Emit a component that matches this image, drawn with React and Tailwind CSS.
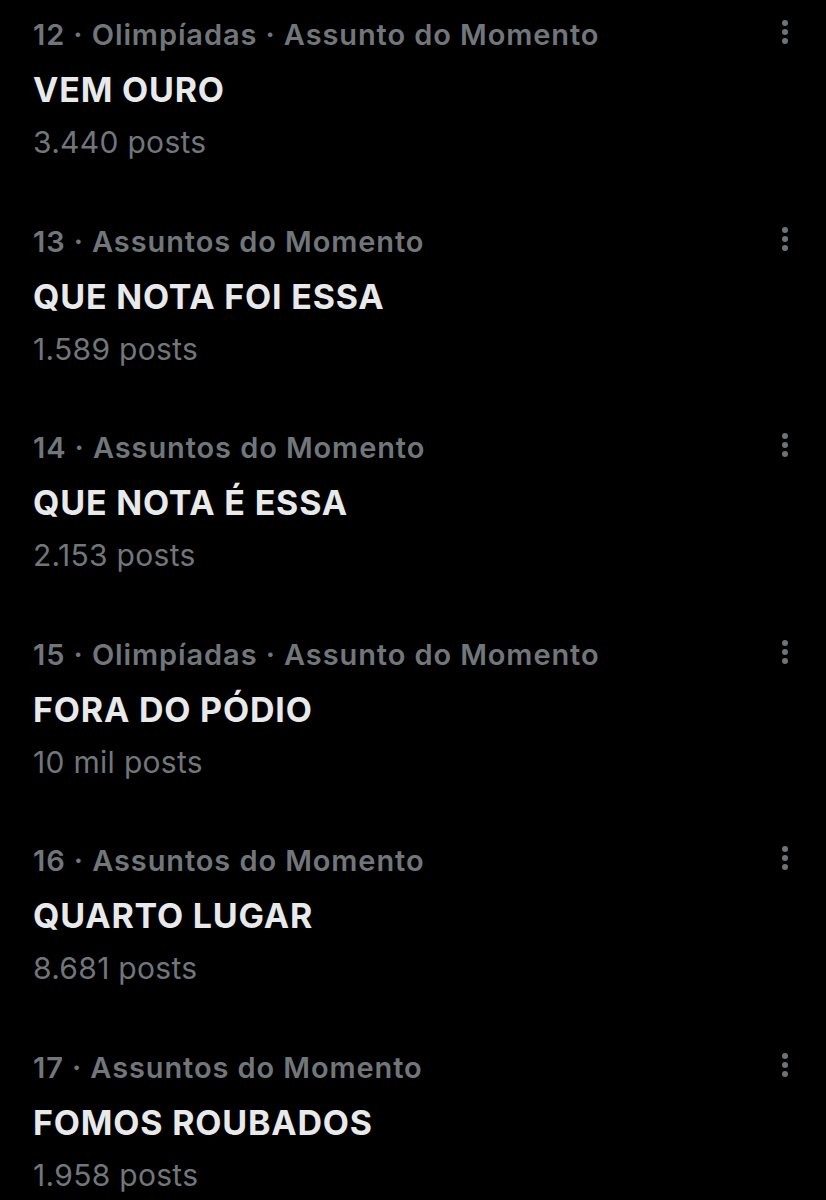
import React from 'react';

const trends = [
  { rank: 12, context: 'Olimpíadas · Assunto do Momento', title: 'VEM OURO', posts: '3.440 posts' },
  { rank: 13, context: 'Assuntos do Momento', title: 'QUE NOTA FOI ESSA', posts: '1.589 posts' },
  { rank: 14, context: 'Assuntos do Momento', title: 'QUE NOTA É ESSA', posts: '2.153 posts' },
  { rank: 15, context: 'Olimpíadas · Assunto do Momento', title: 'FORA DO PÓDIO', posts: '10 mil posts' },
  { rank: 16, context: 'Assuntos do Momento', title: 'QUARTO LUGAR', posts: '8.681 posts' },
  { rank: 17, context: 'Assuntos do Momento', title: 'FOMOS ROUBADOS', posts: '1.958 posts' },
];

const MoreIcon = () => (
  <svg width="8" height="26" viewBox="0 0 8 26" className="text-[#6e7378]">
    <circle cx="4" cy="4" r="3" fill="currentColor" />
    <circle cx="4" cy="13" r="3" fill="currentColor" />
    <circle cx="4" cy="22" r="3" fill="currentColor" />
  </svg>
);

const TrendItem = ({ trend }) => (
  <div className="flex items-start justify-between pl-[33px] pr-[37px] pt-[18px] h-[206.6px]">
    <div className="flex flex-col">
      <div className="text-[29px] leading-[34px] font-semibold text-[#71767b] tracking-[0.9px] whitespace-nowrap">
        {trend.rank} · {trend.context}
      </div>
      <div className="mt-[18px] text-[34px] leading-[40px] font-bold text-[#e7e9ea] tracking-[0.8px]">
        {trend.title}
      </div>
      <div className="mt-[14px] text-[30px] leading-[36px] text-[#71767b] tracking-[0.3px]">
        {trend.posts}
      </div>
    </div>
    <div className="pt-[1px]">
      <MoreIcon />
    </div>
  </div>
);

export default function App() {
  return (
    <div
      className="w-[826px] h-[1200px] bg-black overflow-hidden"
      style={{ fontFamily: 'Inter, "Liberation Sans", Arial, sans-serif' }}
    >
      {trends.map((t) => (
        <TrendItem key={t.rank} trend={t} />
      ))}
    </div>
  );
}
